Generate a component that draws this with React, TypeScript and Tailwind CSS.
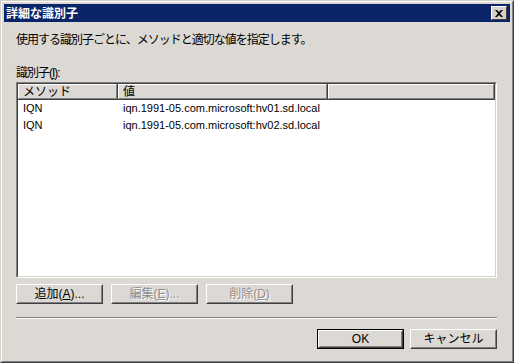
import React from 'react';

const face = 'bg-[#dcd8d4]';
const font = { fontFamily: '"Liberation Sans", "Noto Sans CJK JP", sans-serif' };

const rows = [
  { method: 'IQN', value: 'iqn.1991-05.com.microsoft:hv01.sd.local' },
  { method: 'IQN', value: 'iqn.1991-05.com.microsoft:hv02.sd.local' },
];

const Button = ({
  children,
  disabled,
  primary,
}: {
  children: React.ReactNode;
  disabled?: boolean;
  primary?: boolean;
}) => {
  const inner = (
    <div className="h-full w-full border border-t-white border-l-white border-r-[#404040] border-b-[#404040]">
      <div
        className={`h-full w-full flex items-center justify-center border border-t-transparent border-l-transparent border-r-[#808080] border-b-[#808080] text-[12px] ${
          disabled ? 'text-[#8c8c8c] [text-shadow:1px_1px_0_#ffffff]' : 'text-black'
        }`}
      >
        {children}
      </div>
    </div>
  );
  return (
    <div className={`w-[87px] h-[20px] ${primary ? 'border border-black' : ''}`}>{inner}</div>
  );
};

const HeaderCell = ({ children, className }: { children?: React.ReactNode; className: string }) => (
  <div className={`h-full border-r border-b border-r-[#404040] border-b-[#404040] ${className}`}>
    <div className="h-full border border-t-white border-l-white border-r-[#808080] border-b-[#808080] pl-[4px] flex items-center text-[12px] leading-none">
      {children}
    </div>
  </div>
);

export default function App() {
  return (
    <div className="w-[514px] h-[363px] overflow-hidden" style={font}>
      <div className="w-full h-full border border-t-[#d4d0c8] border-l-[#d4d0c8] border-r-[#404040] border-b-[#404040]">
        <div className={`w-full h-full border border-t-white border-l-white border-r-[#808080] border-b-[#808080] p-[2px] ${face} flex flex-col`}>
          {/* title bar */}
          <div className="h-[18px] bg-[#0a246a] flex items-center justify-between pl-[2px] pr-[3px]">
            <span className="text-white font-bold text-[12px] leading-none" style={{ fontFamily: '"Noto Sans CJK JP", sans-serif' }}>
              詳細な識別子
            </span>
            <div className="w-[16px] h-[14px] bg-[#d4d0c8] border border-t-white border-l-white border-r-[#404040] border-b-[#404040] flex items-center justify-center">
              <svg width="8" height="7" viewBox="0 0 8 7">
                <path d="M0 0h2l2 2 2-2h2L5 3.5 8 7H6L4 5 2 7H0l3-3.5z" fill="#000" />
              </svg>
            </div>
          </div>

          <div className="flex-1 flex flex-col pl-[12px] pr-[13px]">
            <div className="mt-[10px] text-[12px] leading-[16px] text-black tracking-[-1px]">
              使用する識別子ごとに、メソッドと適切な値を指定します。
            </div>

            <div className="mt-[17px] text-[12px] leading-[16px] text-black tracking-[-1px]">
              識別子(<span className="underline">I</span>):
            </div>

            {/* list box */}
            <div className="mt-[1px] h-[196px] border border-t-[#808080] border-l-[#808080] border-r-white border-b-white">
              <div className="h-full border border-t-[#404040] border-l-[#404040] border-r-[#d4d0c8] border-b-[#d4d0c8] bg-white flex flex-col">
                <div className={`h-[16px] flex ${face}`}>
                  <HeaderCell className="w-[100px]">メソッド</HeaderCell>
                  <HeaderCell className="w-[210px]">値</HeaderCell>
                  <HeaderCell className="flex-1" />
                </div>
                <div className="flex flex-col">
                  {rows.map((r, i) => (
                    <div key={i} className="h-[17px] flex items-center text-[11px] leading-none text-black">
                      <div className="w-[100px] pl-[5px]">{r.method}</div>
                      <div className="pl-[5px]">{r.value}</div>
                    </div>
                  ))}
                </div>
              </div>
            </div>

            <div className="mt-[6px] flex gap-[8px]">
              <Button>
                追加(<span className="underline">A</span>)...
              </Button>
              <Button disabled>
                編集(<span className="underline">E</span>)...
              </Button>
              <Button disabled>
                削除(<span className="underline">D</span>)
              </Button>
            </div>

            <div className="mt-[13px] h-[2px] border-t border-t-[#808080] border-b border-b-white" />

            <div className="mt-[10px] flex justify-end gap-[6px]">
              <Button primary>OK</Button>
              <Button>キャンセル</Button>
            </div>
          </div>
        </div>
      </div>
    </div>
  );
}
